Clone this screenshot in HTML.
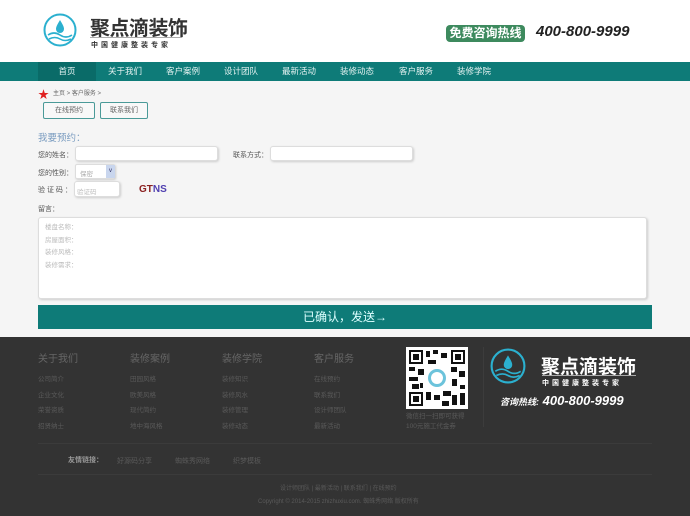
<!DOCTYPE html>
<html><head><meta charset="utf-8"><style>
*{margin:0;padding:0;box-sizing:border-box}
body{width:690px;height:516px;overflow:hidden;background:#f5f5f5;font-family:"Liberation Sans","Noto Sans CJK SC",sans-serif;position:relative;font-size:8px;color:#555}
.a{position:absolute;white-space:nowrap}
.top{position:absolute;left:0;top:0;width:690px;height:62px;background:#fff}
.nav{position:absolute;left:0;top:62px;width:690px;height:19px;background:#0e7b78}
.nav span{position:absolute;top:0;height:19px;line-height:19px;color:#e6f3f2;font-size:8.5px;width:58px;text-align:center}
.inp{position:absolute;background:#fff;border:1px solid #ddd;border-radius:3px;box-shadow:1px 1px 2px #ccc}
.btn{position:absolute;border:1px solid #4a9a98;border-radius:2px;background:#f8f8f8;color:#666;font-size:7px;text-align:center;line-height:15px}
.foot{position:absolute;left:0;top:337px;width:690px;height:179px;background:#333}
.fh{position:absolute;top:350px;color:#666;font-size:10px}
.fl{position:absolute;color:#5a5a5a;font-size:6.5px}
</style></head><body>
<div class="top"></div>
<svg class="a" style="left:43px;top:13px" width="34" height="34" viewBox="0 0 34 34"><circle cx="17" cy="17" r="15.5" fill="none" stroke="#2bb0cf" stroke-width="2"/><path d="M17 7 C14 12 13 14 13 16 a4 4 0 0 0 8 0 c0-2-1-4-4-9z" fill="#2bb0cf"/><path d="M5 22 q6-4 12 0 t12 0 M6 26 q6-3 11 0 t11 0" stroke="#2bb0cf" stroke-width="1.6" fill="none"/></svg>
<div class="a" style="left:90px;top:12px;font-size:20px;font-weight:bold;color:#333;letter-spacing:-0.5px">聚点滴装饰</div>
<div class="a" style="left:90px;top:37px;width:92px;border-top:1px solid #aaa"></div>
<div class="a" style="left:91px;top:40px;font-size:7px;color:#333;letter-spacing:3px;font-weight:bold">中国健康整装专家</div>
<div class="a" style="left:446px;top:25px;width:79px;height:17px;background:#3d8a5e;border-radius:4px;color:#fff;font-size:12px;font-weight:bold;line-height:17px;text-align:center">免费咨询热线</div>
<div class="a" style="left:536px;top:23px;font-size:15px;font-style:italic;font-weight:bold;color:#222">400-800-9999</div>
<div class="nav"><span style="left:38px;background:#0a6b68">首页</span><span style="left:96px">关于我们</span><span style="left:154px">客户案例</span><span style="left:212px">设计团队</span><span style="left:270px">最新活动</span><span style="left:328px">装修动态</span><span style="left:387px">客户服务</span><span style="left:445px">装修学院</span></div>
<div class="a" style="left:38px;top:86px;color:#e02020;font-size:11px">★</div>
<div class="a" style="left:53px;top:88px;font-size:6px;color:#666">主页 &gt; 客户服务 &gt;</div>
<div class="btn" style="left:43px;top:102px;width:52px;height:17px">在线预约</div>
<div class="btn" style="left:100px;top:102px;width:48px;height:17px">联系我们</div>
<div class="a" style="left:38px;top:130px;font-size:9.5px;color:#7a9cc0">我要预约：</div>
<div class="a" style="left:38px;top:150px;font-size:7px">您的姓名：</div>
<div class="inp" style="left:75px;top:146px;width:143px;height:15px"></div>
<div class="a" style="left:233px;top:150px;font-size:7px">联系方式：</div>
<div class="inp" style="left:270px;top:146px;width:143px;height:15px"></div>
<div class="a" style="left:38px;top:168px;font-size:7px">您的性别：</div>
<div class="inp" style="left:75px;top:164px;width:40px;height:15px;border-radius:2px"><span class="a" style="left:4px;top:3px;font-size:6.5px;color:#aaa">保密</span><span class="a" style="left:30px;top:0;width:9px;height:13px;background:#c9d6ee;font-size:6px;color:#336;text-align:center;line-height:13px">v</span></div>
<div class="a" style="left:38px;top:185px;font-size:7px">验 证 码 ：</div>
<div class="inp" style="left:74px;top:181px;width:46px;height:16px"><span class="a" style="left:2px;top:4px;font-size:6.5px;color:#bbb">验证码</span></div>
<div class="a" style="left:139px;top:184px;font-size:10px;font-weight:bold;color:#8a2020">GT<span style="color:#5040b0">NS</span></div>
<div class="a" style="left:38px;top:204px;font-size:7px">留言：</div>
<div class="inp" style="left:38px;top:217px;width:609px;height:82px"><div class="a" style="left:6px;top:4px;font-size:6.5px;color:#bbb;line-height:12.7px">楼盘名称：<br>房屋面积：<br>装修风格：<br>装修需求：</div></div>
<div class="a" style="left:38px;top:305px;width:614px;height:24px;background:#0e7b78;color:#dff;font-size:12px;text-align:center;line-height:25px">已确认，发送→</div>
<div class="foot"></div>
<div class="fh" style="left:38px">关于我们</div><div class="fh" style="left:130px">装修案例</div><div class="fh" style="left:222px">装修学院</div><div class="fh" style="left:314px">客户服务</div>
<div class="fl" style="left:38px;top:372px;line-height:15.5px">公司简介<br>企业文化<br>荣誉资质<br>招贤纳士</div>
<div class="fl" style="left:130px;top:372px;line-height:15.5px">田园风格<br>欧美风格<br>现代简约<br>地中海风格</div>
<div class="fl" style="left:222px;top:372px;line-height:15.5px">装修知识<br>装修风水<br>装修管理<br>装修动态</div>
<div class="fl" style="left:314px;top:372px;line-height:15.5px">在线预约<br>联系我们<br>设计师团队<br>最新活动</div>
<svg class="a" style="left:406px;top:347px" width="62" height="62" viewBox="0 0 62 62"><rect width="62" height="62" fill="#fff"/><g fill="#111"><rect x="3" y="3" width="14" height="14"/><rect x="45" y="3" width="14" height="14"/><rect x="3" y="45" width="14" height="14"/></g><g fill="#fff"><rect x="5" y="5" width="10" height="10"/><rect x="47" y="5" width="10" height="10"/><rect x="5" y="47" width="10" height="10"/></g><g fill="#111"><rect x="7" y="7" width="6" height="6"/><rect x="49" y="7" width="6" height="6"/><rect x="7" y="49" width="6" height="6"/><rect x="20" y="4" width="4" height="6"/><rect x="27" y="3" width="5" height="4"/><rect x="35" y="6" width="6" height="5"/><rect x="22" y="13" width="8" height="4"/><rect x="3" y="20" width="6" height="4"/><rect x="12" y="22" width="6" height="6"/><rect x="3" y="30" width="9" height="4"/><rect x="6" y="37" width="7" height="5"/><rect x="45" y="20" width="6" height="5"/><rect x="53" y="24" width="6" height="6"/><rect x="46" y="32" width="5" height="7"/><rect x="54" y="38" width="5" height="4"/><rect x="20" y="45" width="5" height="8"/><rect x="28" y="48" width="6" height="5"/><rect x="37" y="44" width="8" height="5"/><rect x="46" y="48" width="5" height="10"/><rect x="54" y="46" width="5" height="12"/><rect x="36" y="54" width="7" height="5"/><rect x="14" y="36" width="3" height="5"/></g><circle cx="31" cy="31" r="9" fill="#6cc3db"/><circle cx="31" cy="31" r="6" fill="#fff"/></svg>
<div class="fl" style="left:406px;top:412px;line-height:10px">微信扫一扫即可获得<br>100元施工代金券</div>
<div class="a" style="left:483px;top:347px;width:1px;height:80px;background:#3c3c3c"></div>
<svg class="a" style="left:490px;top:348px" width="36" height="36" viewBox="0 0 34 34"><circle cx="17" cy="17" r="15.5" fill="none" stroke="#2bb0cf" stroke-width="2"/><path d="M17 7 C14 12 13 14 13 16 a4 4 0 0 0 8 0 c0-2-1-4-4-9z" fill="#2bb0cf"/><path d="M5 22 q6-4 12 0 t12 0 M6 26 q6-3 11 0 t11 0" stroke="#2bb0cf" stroke-width="1.6" fill="none"/></svg>
<div class="a" style="left:541px;top:352px;font-size:19px;font-weight:bold;color:#fff">聚点滴装饰</div>
<div class="a" style="left:542px;top:375px;width:94px;border-top:1px solid #aaa"></div>
<div class="a" style="left:542px;top:378px;font-size:7px;color:#fff;letter-spacing:3px;font-weight:bold">中国健康整装专家</div>
<div class="a" style="left:500px;top:393px;font-size:13px;font-style:italic;font-weight:bold;color:#fff"><span style="font-size:9px">咨询热线:</span> 400-800-9999</div>
<div class="a" style="left:38px;top:443px;width:614px;height:1px;background:#3b3b3b"></div>
<div class="a" style="left:68px;top:455px;font-size:7px;color:#999;font-weight:bold">友情链接：</div>
<div class="fl" style="left:117px;top:456px;font-size:7px">好源码分享</div>
<div class="fl" style="left:175px;top:456px;font-size:7px">蜘蛛秀网络</div>
<div class="fl" style="left:233px;top:456px;font-size:7px">织梦模板</div>
<div class="a" style="left:38px;top:474px;width:614px;height:1px;background:#3b3b3b"></div>
<div class="fl" style="left:280px;top:483px;font-size:6px">设计师团队 | 最新活动 | 联系我们 | 在线预约</div>
<div class="fl" style="left:258px;top:496px;font-size:6px">Copyright © 2014-2015 zhizhuxiu.com. 蜘蛛秀网络 版权所有</div>
</body></html>
